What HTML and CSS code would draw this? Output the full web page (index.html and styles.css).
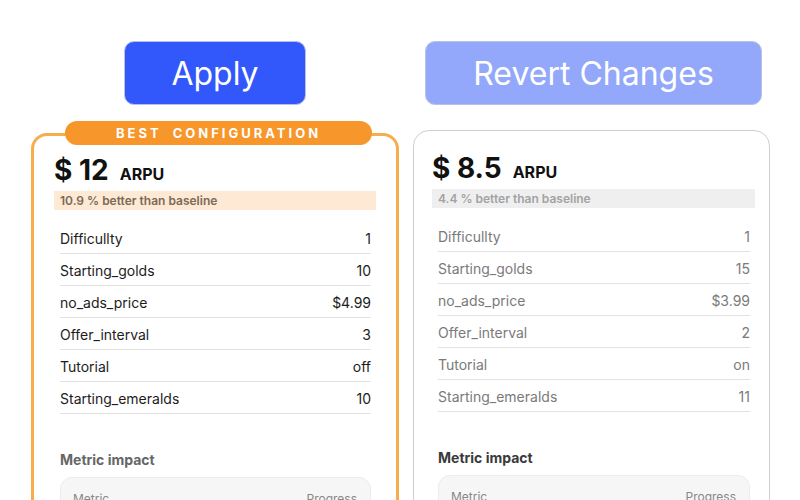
FILE: index.html
```html
<!DOCTYPE html>
<html lang="en">
<head>
    <meta charset="UTF-8">
    <title>Configurations</title>
    <link rel="stylesheet" href="styles.css">
</head>
<body>
    <div class="columns">
        <section class="column col-best">
            <button class="btn btn-apply">Apply</button>
            <div class="card card-best">
                <div class="badge">BEST CONFIGURATION</div>
                <div class="arpu"><span class="amount">$ 12</span><span class="unit">ARPU</span></div>
                <div class="delta">10.9 % better than baseline</div>
                <ul class="params">
                    <li><span>Difficullty</span><span>1</span></li>
                    <li><span>Starting_golds</span><span>10</span></li>
                    <li><span>no_ads_price</span><span>$4.99</span></li>
                    <li><span>Offer_interval</span><span>3</span></li>
                    <li><span>Tutorial</span><span>off</span></li>
                    <li><span>Starting_emeralds</span><span>10</span></li>
                </ul>
                <h3 class="impact-title">Metric impact</h3>
                <div class="impact-table">
                    <span>Metric</span><span>Progress</span>
                </div>
            </div>
        </section>

        <section class="column col-other">
            <button class="btn btn-revert">Revert Changes</button>
            <div class="card card-other">
                <div class="arpu"><span class="amount">$ 8.5</span><span class="unit">ARPU</span></div>
                <div class="delta">4.4 % better than baseline</div>
                <ul class="params">
                    <li><span>Difficullty</span><span>1</span></li>
                    <li><span>Starting_golds</span><span>15</span></li>
                    <li><span>no_ads_price</span><span>$3.99</span></li>
                    <li><span>Offer_interval</span><span>2</span></li>
                    <li><span>Tutorial</span><span>on</span></li>
                    <li><span>Starting_emeralds</span><span>11</span></li>
                </ul>
                <h3 class="impact-title">Metric impact</h3>
                <div class="impact-table">
                    <span>Metric</span><span>Progress</span>
                </div>
            </div>
        </section>
    </div>
</body>
</html>
```

FILE: styles.css
```css
html, body {
    margin: 0;
    padding: 0;
    height: 100%;
    overflow: hidden;
    background: #fff;
    font-family: Inter, "Noto Sans", sans-serif;
    color: #111;
}

.columns {
    display: flex;
    gap: 14px;
    padding: 41px 0 0 31px;
}

.column {
    display: flex;
    flex-direction: column;
    align-items: center;
}

.col-best {
    width: 368px;
}

.col-other {
    width: 357px;
}

.btn {
    height: 64px;
    border-radius: 10px;
    border: 1px solid #b9c2e6;
    color: #fff;
    font-family: Inter, sans-serif;
    font-size: 32px;
    font-weight: 400;
    cursor: pointer;
}

.btn-apply {
    width: 182px;
    background: #3258fb;
}

.btn-revert {
    width: 337px;
    margin-left: 4px;
    background: #93a8fb;
}

.card {
    position: relative;
    box-sizing: border-box;
    width: 100%;
    height: 400px;
    border-radius: 16px;
    background: #fff;
}

.card-best {
    margin-top: 28px;
    border: 3px solid #f6ae4d;
    padding: 17px 20px 0 20px;
}

.card-other {
    margin-top: 25px;
    border: 1px solid #cfcfcf;
    padding: 20px 14px 0 18px;
}

.badge {
    position: absolute;
    top: -15px;
    left: 31px;
    width: 307px;
    height: 24px;
    border-radius: 12px;
    background: #f7962a;
    color: #fff;
    font-size: 13px;
    font-weight: 700;
    letter-spacing: 3px;
    line-height: 24px;
    text-align: center;
    word-spacing: 5px;
}

.arpu {
    display: flex;
    align-items: baseline;
    gap: 11px;
    height: 34px;
    margin-bottom: 4px;
}

.amount {
    font-size: 28px;
    font-weight: 700;
}

.unit {
    font-size: 16px;
    font-weight: 700;
}

.delta {
    height: 19px;
    line-height: 19px;
    padding-left: 6px;
    font-size: 12px;
    font-weight: 600;
}

.card-best .delta {
    background: #fde9d4;
    color: #7c6a58;
}

.card-other .delta {
    background: #efefef;
    color: #a3a3a3;
}

.params {
    list-style: none;
    margin: 12px 0 0 0;
    padding: 0 5px 0 6px;
}

.params li {
    display: flex;
    justify-content: space-between;
    height: 31px;
    line-height: 34px;
    border-bottom: 1px solid #e2e2e2;
    font-size: 14px;
}

.card-best .params li {
    color: #1c1c1c;
}

.card-other .params li {
    color: #7a7a7a;
}

.impact-title {
    margin: 37px 0 0 6px;
    font-size: 14px;
    font-weight: 700;
}

.card-best .impact-title {
    color: #666;
}

.card-other .impact-title {
    color: #3a3a3a;
}

.impact-table {
    display: flex;
    justify-content: space-between;
    margin: 9px 5px 0 6px;
    height: 40px;
    padding: 13px 13px 0 12px;
    border: 1px solid #ececec;
    border-radius: 12px;
    background: #f6f6f6;
    font-size: 12px;
    color: #888;
}
```
